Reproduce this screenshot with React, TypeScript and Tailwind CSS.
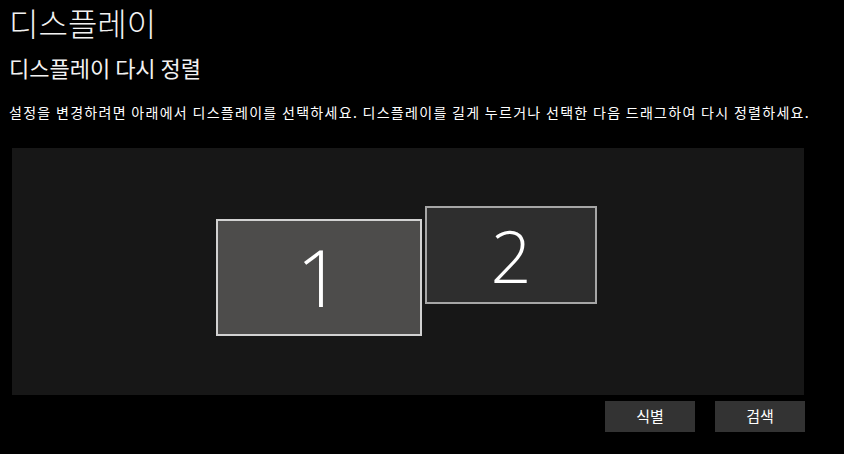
import React from "react";

export default function App() {
  return (
    <div
      className="w-[844px] h-[454px] bg-black text-white overflow-hidden"
      style={{ fontFamily: '"Noto Sans CJK KR", "Noto Sans", sans-serif' }}
    >
      <div className="pl-[9px]">
        <h1 className="text-[32px] leading-[44px] font-light text-[#f2f2f2]">디스플레이</h1>
        <h2 className="mt-[8px] text-[22px] leading-[30px] font-normal text-[#f2f2f2]">디스플레이 다시 정렬</h2>
        <p className="mt-[20px] text-[14px] leading-[20px] tracking-[1.3px] text-white whitespace-nowrap">
          설정을 변경하려면 아래에서 디스플레이를 선택하세요. 디스플레이를 길게 누르거나 선택한 다음 드래그하여 다시 정렬하세요.
        </p>
      </div>
      <div className="ml-[12px] mt-[26px] w-[792px] h-[247px] bg-[#171717] relative">
        <div className="absolute left-[204px] top-[71px] w-[206px] h-[117px] bg-[#4d4c4b] border-2 border-[#d2d2d2] flex items-center justify-center">
          <span className="text-[80px] font-light leading-none text-white -mt-[4px]" style={{ fontFamily: '"Open Sans", sans-serif' }}>1</span>
        </div>
        <div className="absolute left-[413px] top-[58px] w-[172px] h-[98px] bg-[#2e2e2e] border-2 border-[#a6a6a6] flex items-center justify-center">
          <span className="text-[72px] font-light leading-none text-white" style={{ fontFamily: '"Open Sans", sans-serif' }}>2</span>
        </div>
      </div>
      <div className="flex justify-end gap-[20px] mt-[6px] w-[805px]">
        <button className="w-[90px] h-[31px] bg-[#333333] text-[15px] text-white">식별</button>
        <button className="w-[90px] h-[31px] bg-[#333333] text-[15px] text-white">검색</button>
      </div>
    </div>
  );
}
